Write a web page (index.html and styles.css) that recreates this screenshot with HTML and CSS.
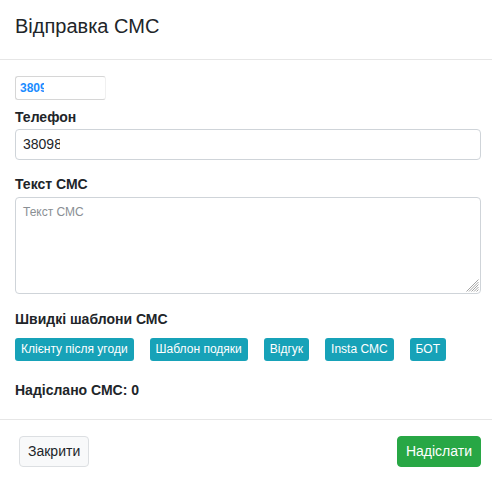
FILE: index.html
```html
<!DOCTYPE html>
<html lang="uk">
<head>
<meta charset="utf-8">
<title>Відправка СМС</title>
<link rel="stylesheet" href="styles.css">
</head>
<body>
<div class="modal">
  <header class="modal-header">
    <h5 class="modal-title">Відправка СМС</h5>
  </header>
  <div class="modal-body">
    <div class="mini-input"><span class="mini-text">38098</span></div>
    <div class="group group-phone">
      <label class="label">Телефон</label>
      <div class="input"><span class="input-text">380985</span></div>
    </div>
    <div class="group group-text">
      <label class="label">Текст СМС</label>
      <div class="textarea">
        <span class="placeholder">Текст СМС</span>
        <svg class="grip" width="13" height="13" viewBox="0 0 13 13" aria-hidden="true">
          <g stroke="#9a9a9a" stroke-width="0.9">
            <line x1="12.5" y1="0.5" x2="0.5" y2="12.5"/>
            <line x1="12.5" y1="3" x2="3" y2="12.5"/>
            <line x1="12.5" y1="5.5" x2="5.5" y2="12.5"/>
            <line x1="12.5" y1="8" x2="8" y2="12.5"/>
            <line x1="12.5" y1="10.5" x2="10.5" y2="12.5"/>
          </g>
        </svg>
      </div>
    </div>
    <div class="group group-templates">
      <label class="label">Швидкі шаблони СМС</label>
      <div class="templates">
        <button class="tpl">Клієнту після угоди</button>
        <button class="tpl">Шаблон подяки</button>
        <button class="tpl">Відгук</button>
        <button class="tpl">Insta СМС</button>
        <button class="tpl">БОТ</button>
      </div>
    </div>
    <p class="sent">Надіслано СМС: 0</p>
  </div>
  <footer class="modal-footer">
    <button class="btn btn-light">Закрити</button>
    <button class="btn btn-success">Надіслати</button>
  </footer>
</div>
</body>
</html>
```

FILE: styles.css
```css
* { box-sizing: border-box; }
html, body { margin: 0; padding: 0; background: #fff; }
body {
  font-family: "Liberation Sans", Arial, Helvetica, sans-serif;
  font-size: 14px;
  line-height: 21px;
  color: #212529;
  overflow: hidden;
}
.modal { width: 492px; }
.modal-header {
  padding: 11px 15px 18px;
  border-bottom: 1px solid #e6e6e6;
}
.modal-title {
  margin: 0;
  font-size: 20px;
  line-height: 30px;
  font-weight: 400;
}
.modal-body {
  padding: 16px 11px 18px 15px;
}
.mini-input {
  width: 91px;
  height: 24px;
  border: 1px solid #d6d6d6;
  border-right-color: #f0f0f0;
  border-radius: 3px;
  padding: 0 0 0 4px;
  display: flex;
  align-items: center;
  margin-bottom: 7px;
}
.mini-text {
  display: block;
  width: 24px;
  overflow: hidden;
  white-space: nowrap;
  color: #1a8cff;
  font-size: 12px;
  font-weight: 700;
  line-height: 15px;
}
.label {
  display: block;
  font-weight: 700;
  margin-bottom: 1px;
}
.input {
  height: 31px;
  border: 1px solid #cfd4d9;
  border-radius: 4px;
  padding: 0 0 0 7px;
  display: flex;
  align-items: center;
}
.input-text {
  display: block;
  width: 37px;
  overflow: hidden;
  white-space: nowrap;
}
.group-text { margin-top: 14px; }
.textarea {
  position: relative;
  margin-top: 2px;
  height: 97px;
  border: 1px solid #cfd4d9;
  border-radius: 4px;
  padding: 3px 7px;
}
.placeholder {
  font-size: 12px;
  line-height: 18px;
  color: #8a8f94;
}
.grip {
  position: absolute;
  right: 1px;
  bottom: 1px;
}
.group-templates { margin-top: 15px; }
.templates {
  display: flex;
  gap: 16px;
  margin-top: 8px;
}
.tpl {
  font-family: inherit;
  font-size: 12px;
  line-height: 17px;
  padding: 3px 6px;
  border: 0;
  border-radius: 3px;
  background: #17a2b8;
  color: #fff;
}
.sent {
  margin: 19px 0 0;
  font-weight: 700;
}
.modal-footer {
  border-top: 1px solid #e6e6e6;
  padding: 16px 11px 0 19px;
  display: flex;
  justify-content: space-between;
}
.btn {
  font-family: inherit;
  font-size: 14px;
  line-height: 21px;
  padding: 4px 8px;
  border-radius: 4px;
  border: 1px solid transparent;
}
.btn-light {
  background: #f8f9fa;
  border-color: #dcdfe2;
  color: #212529;
}
.btn-success {
  background: #28a745;
  border-color: #28a745;
  color: #fff;
}
```
